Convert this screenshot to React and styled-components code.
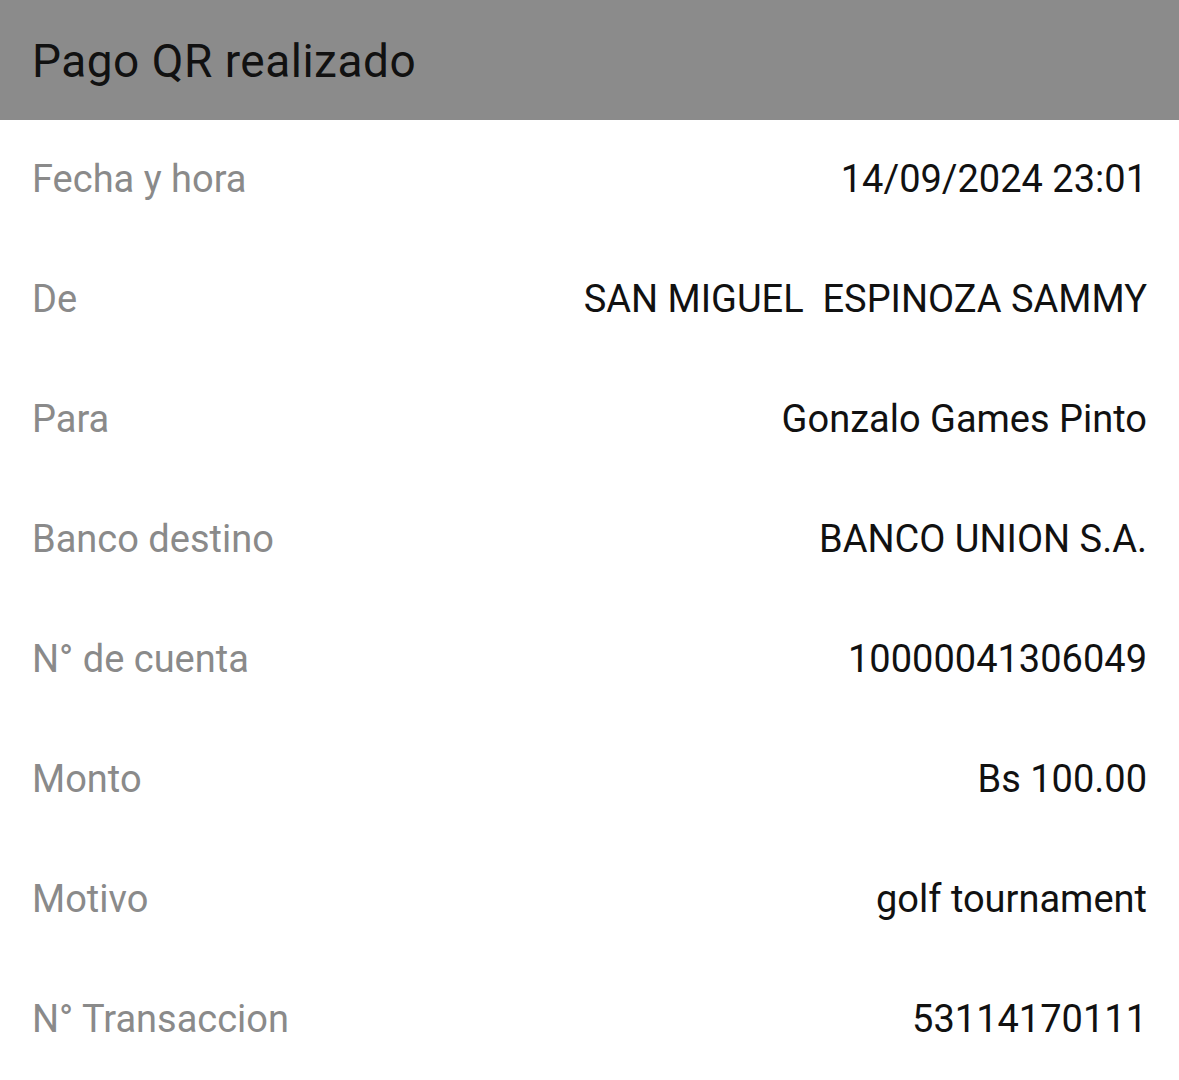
import styled, { createGlobalStyle } from "styled-components";

const GlobalStyle = createGlobalStyle`
    body {
        margin: 0;
        background-color: #ffffff;
        font-family: "Roboto", "Liberation Sans", sans-serif;
    }
`;

const Page = styled.div`
    width: 1179px;
    height: 1080px;
    overflow: hidden;
    background-color: #ffffff;
`;

const Header = styled.div`
    height: 120px;
    display: flex;
    align-items: center;
    padding: 0 32px;
    background-color: #8b8b8b;
`;

const Title = styled.h1`
    margin: 0;
    margin-top: 2px;
    font-size: 46px;
    font-weight: 400;
    letter-spacing: 0.5px;
    color: #111111;
`;

const Row = styled.div`
    height: 120px;
    display: flex;
    align-items: center;
    justify-content: space-between;
    padding: 0 32px;
`;

const Label = styled.span`
    margin-top: -3px;
    font-size: 38px;
    color: #8a8a8a;
`;

const Value = styled.span`
    margin-top: -3px;
    font-size: 38px;
    color: #111111;
    text-align: right;
    white-space: pre;
`;

const rows = [
    ["Fecha y hora", "14/09/2024 23:01"],
    ["De", "SAN MIGUEL  ESPINOZA SAMMY"],
    ["Para", "Gonzalo Games Pinto"],
    ["Banco destino", "BANCO UNION S.A."],
    ["N° de cuenta", "10000041306049"],
    ["Monto", "Bs 100.00"],
    ["Motivo", "golf tournament"],
    ["N° Transaccion", "53114170111"],
];

const App = () => {
    return (
        <Page>
            <GlobalStyle />
            <Header>
                <Title>Pago QR realizado</Title>
            </Header>
            {rows.map(([label, value]) => (
                <Row key={label}>
                    <Label>{label}</Label>
                    <Value>{value}</Value>
                </Row>
            ))}
        </Page>
    )
}

export default App;
